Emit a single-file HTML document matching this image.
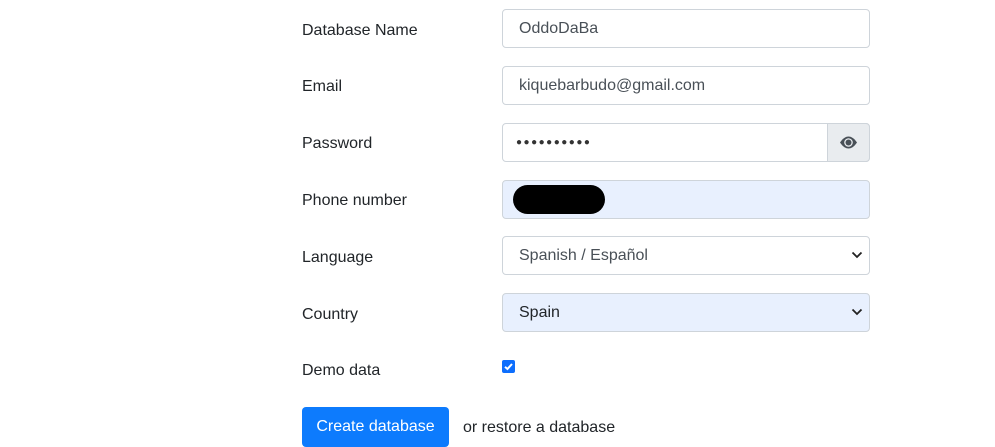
<html><head><style>
body{margin:0;width:995px;height:431px;overflow:hidden;background:#fff;font-family:"Liberation Sans",sans-serif;font-size:16px;color:#212529;position:relative}
.l{position:absolute;left:302px;line-height:20px}
.i{position:absolute;left:502px;width:368px;height:39px;box-sizing:border-box;border:1px solid #ced4da;border-radius:4px;padding-left:16px;line-height:37px;color:#495057;background:#fff}
.blue{background:#e8f0fe}
.arr{position:absolute;right:6px;top:14px}
</style></head><body>
<div class="l" style="top:21px">Database Name</div>
<div class="i" style="top:9px">OddoDaBa</div>
<div class="l" style="top:77px">Email</div>
<div class="i" style="top:66px">kiquebarbudo@gmail.com</div>
<div class="l" style="top:134px">Password</div>
<div class="i" style="top:123px;font-size:10px;letter-spacing:1.5px;color:#333;padding-left:13px">●●●●●●●●●●</div>
<div style="position:absolute;left:827px;top:123px;width:43px;height:39px;box-sizing:border-box;background:#e9ecef;border:1px solid #ced4da;border-radius:0 4px 4px 0">
<svg width="41" height="37" viewBox="0 0 41 37"><path d="M12 18.5C15 14 18 12.5 20.5 12.5S26 14 29 18.5C26 23 23 24.5 20.5 24.5S15 23 12 18.5Z" fill="#495057"/><circle cx="20.5" cy="18.5" r="4.3" fill="#e9ecef"/><circle cx="20.5" cy="18.5" r="3" fill="#495057"/></svg></div>
<div class="l" style="top:191px">Phone number</div>
<div class="i blue" style="top:180px"><div style="position:absolute;left:10px;top:4px;width:92px;height:29px;background:#000;border-radius:15px"></div></div>
<div class="l" style="top:248px">Language</div>
<div class="i" style="top:236px">Spanish / Español<svg class="arr" width="12" height="8"><path d="M1.5 1.5L6 6L10.5 1.5" stroke="#222" stroke-width="1.8" fill="none"/></svg></div>
<div class="l" style="top:305px">Country</div>
<div class="i blue" style="top:293px;color:#212529">Spain<svg class="arr" width="12" height="8"><path d="M1.5 1.5L6 6L10.5 1.5" stroke="#222" stroke-width="1.8" fill="none"/></svg></div>
<div class="l" style="top:361px">Demo data</div>
<div style="position:absolute;left:502px;top:360px;width:13px;height:13px;background:#0d6efd;border-radius:2px"><svg width="13" height="13"><path d="M3 6.8L5.4 9L10 4" stroke="#fff" stroke-width="2" fill="none"/></svg></div>
<div style="position:absolute;left:302px;top:407px;width:147px;height:40px;background:#0d7bfd;border-radius:4px;color:#fff;text-align:center;line-height:40px">Create database</div>
<div class="l" style="left:463px;top:418px;line-height:20px">or restore a database</div>
</body></html>
